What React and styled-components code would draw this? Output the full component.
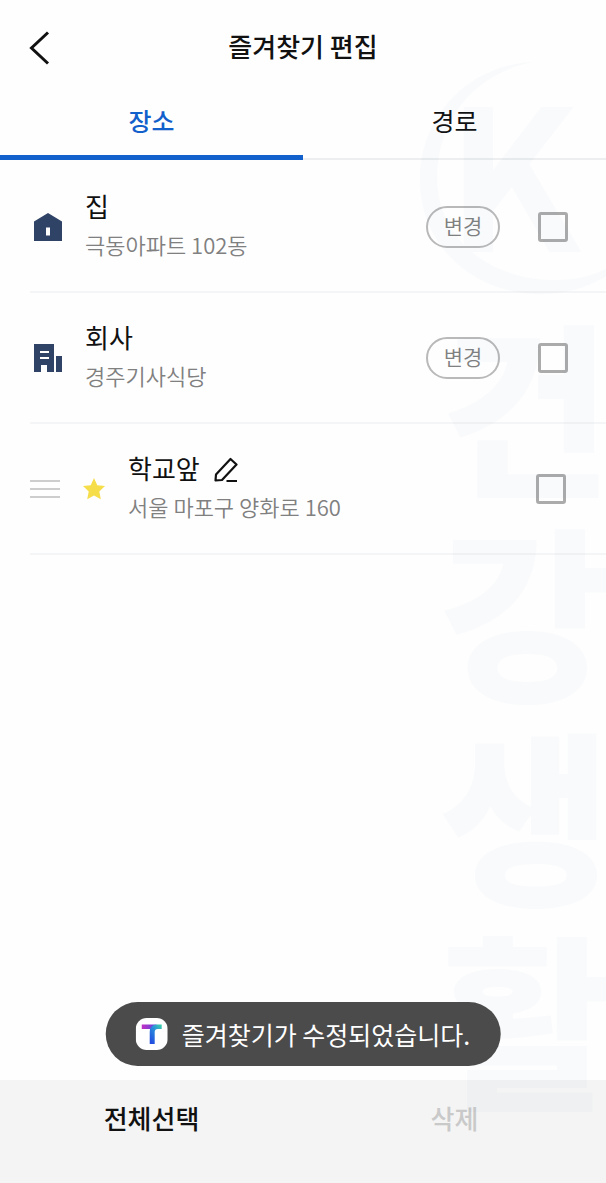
import React, { useState } from "react";
import styled, { createGlobalStyle } from "styled-components";

const GlobalStyle = createGlobalStyle`
  * {
    box-sizing: border-box;
  }
  body {
    margin: 0;
    background-color: #fefefe;
    font-family: "Noto Sans CJK KR", sans-serif;
    color: #111;
  }
  button {
    font-family: inherit;
    padding: 0;
    border: none;
    background: none;
    cursor: pointer;
  }
`;

const Container = styled.div`
  position: relative;
  display: flex;
  flex-direction: column;
  min-height: 100vh;
  overflow: hidden;
`;

const Header = styled.header`
  display: grid;
  grid-template-columns: 48px 1fr 48px;
  align-items: center;
  height: 92px;
  padding: 0 16px;
`;

const BackButton = styled.button`
  display: flex;
  justify-content: center;
  padding-top: 4px;
`;

const Title = styled.h1`
  margin: 0;
  font-size: 26px;
  line-height: 40px;
  font-weight: 500;
  text-align: center;
`;

const Tabs = styled.div`
  display: flex;
  height: 68px;
`;

const Tab = styled.button`
  flex: 1;
  padding-bottom: ${(props) => (props.$active ? "8px" : "11px")};
  border-bottom: ${(props) =>
    props.$active ? "5px solid #1260cb" : "2px solid #eceeef"};
  color: ${(props) => (props.$active ? "#1260cb" : "#111")};
  font-size: 25px;
  line-height: 36px;
  font-weight: ${(props) => (props.$active ? "500" : "400")};
`;

const List = styled.ul`
  flex: 1;
  margin: 0;
  padding: 2px 0 0 30px;
  list-style: none;
`;

const Row = styled.li`
  display: flex;
  align-items: center;
  min-height: 131px;
  padding-right: ${(props) => (props.$sortable ? "40px" : "38px")};
  border-bottom: 2px solid #f4f5f6;
`;

const Handle = styled.button`
  display: flex;
  margin-right: 17px;
`;

const PlaceIcon = styled.div`
  display: flex;
  justify-content: center;
  width: ${(props) => (props.$sortable ? "34px" : "36px")};
  margin-right: ${(props) => (props.$sortable ? "17px" : "19px")};
`;

const Info = styled.div`
  flex: 1;
  padding-bottom: 4px;
`;

const NameLine = styled.div`
  display: flex;
  align-items: center;
  gap: 14px;
`;

const Name = styled.label`
  font-size: 26px;
  line-height: 38px;
`;

const EditButton = styled.button`
  display: flex;
  padding-top: 4px;
`;

const Address = styled.div`
  color: #808080;
  font-size: 22px;
  line-height: 38px;
  font-weight: 350;
`;

const ChangeButton = styled.button`
  width: 74px;
  height: 42px;
  margin-right: 38px;
  padding-bottom: 3px;
  border: 2px solid #b9b9b9;
  border-radius: 21px;
  color: #808080;
  font-size: 21px;
  line-height: 30px;
  font-weight: 350;
`;

const Checkbox = styled.input`
  appearance: none;
  width: 30px;
  height: 30px;
  margin: 0;
  border: 3px solid #ababab;
  border-radius: 3px;
  cursor: pointer;
  &:checked {
    border-color: #1260cb;
    background-color: #1260cb;
  }
`;

const Footer = styled.footer`
  position: relative;
  display: flex;
  height: 103px;
  background-color: #f4f4f4;
`;

const FooterButton = styled.button`
  flex: 1;
  padding-bottom: 28px;
  color: #111;
  font-size: 26px;
  line-height: 38px;
  font-weight: 500;
  &:disabled {
    color: #c9c9c9;
    cursor: default;
  }
`;

const Toast = styled.div`
  position: absolute;
  z-index: 2;
  bottom: 117px;
  left: 50%;
  transform: translateX(-50%);
  display: flex;
  align-items: center;
  gap: 14px;
  height: 64px;
  padding: 0 30px;
  border-radius: 32px;
  background-color: #4b4b4b;
  color: white;
  font-size: 25px;
  line-height: 38px;
  white-space: nowrap;
`;

const Watermark = styled.div`
  position: absolute;
  z-index: 1;
  top: 60px;
  right: 0;
  width: 186px;
  color: #285aa0;
  opacity: 0.02;
  pointer-events: none;
`;

const WatermarkText = styled.div`
  width: 186px;
  padding-left: 20px;
  font-size: 186px;
  line-height: 204px;
  font-weight: 900;
  word-break: break-all;
`;

const BackIcon = () => (
  <svg width="22" height="34" viewBox="0 0 22 34" fill="none" stroke="#111" strokeWidth="3">
    <path d="M19 1.500 2.500 17 19 32.500" />
  </svg>
);

const HomeIcon = () => (
  <svg width="28" height="28" viewBox="0 0 28 28" fill="#2f4366">
    <path fillRule="evenodd" d="M14 0 28 8.500V28H0V8.500zM12 14.500v8h4v-8z" />
  </svg>
);

const OfficeIcon = () => (
  <svg width="28" height="28" viewBox="0 0 28 28" fill="#2f4366">
    <path
      fillRule="evenodd"
      d="M0 0h20v28h-7v-7H7v7H0zM6 7v2h9V7zM6 13v2h9v-2zM22 12h6v16h-6z"
    />
  </svg>
);

const StarIcon = () => (
  <svg width="22" height="22" viewBox="0 0 22 22" fill="#f6de4b">
    <path d="m11 0 3.300 7.200 7.700.9-5.700 5.300 1.500 7.900L11 17.500l-6.800 3.800 1.500-7.900L0 8.100l7.700-.9z" />
  </svg>
);

const HandleIcon = () => (
  <svg width="30" height="20" viewBox="0 0 30 20" stroke="#cdcdcd" strokeWidth="2">
    <path d="M0 2h30M0 10h30M0 18h30" />
  </svg>
);

const PencilIcon = () => (
  <svg width="24" height="26" viewBox="0 0 24 26" fill="none" stroke="#111" strokeWidth="2.200" strokeLinejoin="round">
    <path d="M1.500 23.500 2 17.500 16.500 2l6 5.500L8 23zM12.500 24H23" />
  </svg>
);

const AppIcon = () => (
  <svg width="32" height="32" viewBox="0 0 32 32">
    <defs>
      <linearGradient id="bar" x1="0" x2="1">
        <stop offset="0" stopColor="#c32fc4" />
        <stop offset="1" stopColor="#5549dd" />
      </linearGradient>
      <linearGradient id="stem" x1="1" y1="0" x2="0.200" y2="1">
        <stop offset="0" stopColor="#3ed6a4" />
        <stop offset="0.450" stopColor="#2a8edb" />
        <stop offset="1" stopColor="#224be0" />
      </linearGradient>
    </defs>
    <rect width="32" height="32" rx="11" fill="white" />
    <path d="M6 6.500h15l-5 4.500H6z" fill="url(#bar)" />
    <path d="M26 6.500V11h-4q-3 0-3 3v12h-5V14q0-7.500 7.500-7.500z" fill="url(#stem)" />
  </svg>
);

const WatermarkLogo = () => (
  <svg width="186" height="240" viewBox="0 0 186 240" fill="currentColor" style={{ display: "block" }}>
    <path d="M112 2C46 6 0 58 0 120c0 66 54 114 120 114 26 0 46-6 66-18v-7c-18 9-35 11-52 11-66 0-117-43-117-102C17 62 52 14 112 2z" />
    <text x="26" y="192" fontSize="196" fontWeight="700">K</text>
  </svg>
);

const places = [
  { id: "home", name: "집", address: "극동아파트 102동", icon: <HomeIcon /> },
  { id: "office", name: "회사", address: "경주기사식당", icon: <OfficeIcon /> },
  {
    id: "school",
    name: "학교앞",
    address: "서울 마포구 양화로 160",
    icon: <StarIcon />,
    sortable: true,
  },
];

const App = () => {
  const [tab, setTab] = useState("장소");
  const [selected, setSelected] = useState([]);

  const handleSelect = (id) => {
    setSelected(
      selected.includes(id)
        ? selected.filter((item) => item !== id)
        : [...selected, id]
    );
  };

  return (
    <Container>
      <GlobalStyle />
      <Header>
        <BackButton aria-label="뒤로">
          <BackIcon />
        </BackButton>
        <Title>즐겨찾기 편집</Title>
      </Header>
      <Tabs role="tablist">
        {["장소", "경로"].map((item) => (
          <Tab
            key={item}
            role="tab"
            aria-selected={tab === item}
            $active={tab === item}
            onClick={() => setTab(item)}
          >
            {item}
          </Tab>
        ))}
      </Tabs>
      <List>
        {places.map((place) => (
          <Row key={place.id} $sortable={place.sortable}>
            {place.sortable && (
              <Handle aria-label="순서 변경">
                <HandleIcon />
              </Handle>
            )}
            <PlaceIcon $sortable={place.sortable}>{place.icon}</PlaceIcon>
            <Info>
              <NameLine>
                <Name htmlFor={place.id}>{place.name}</Name>
                {place.sortable && (
                  <EditButton aria-label="이름 편집">
                    <PencilIcon />
                  </EditButton>
                )}
              </NameLine>
              <Address>{place.address}</Address>
            </Info>
            {!place.sortable && <ChangeButton>변경</ChangeButton>}
            <Checkbox
              type="checkbox"
              id={place.id}
              checked={selected.includes(place.id)}
              onChange={() => handleSelect(place.id)}
            />
          </Row>
        ))}
      </List>
      <Footer>
        <FooterButton onClick={() => setSelected(places.map((place) => place.id))}>
          전체선택
        </FooterButton>
        <FooterButton disabled={selected.length === 0}>삭제</FooterButton>
      </Footer>
      <Toast role="status">
        <AppIcon />
        즐겨찾기가 수정되었습니다.
      </Toast>
      <Watermark aria-hidden="true">
        <WatermarkLogo />
        <WatermarkText>건강생활</WatermarkText>
      </Watermark>
    </Container>
  );
};

export default App;
